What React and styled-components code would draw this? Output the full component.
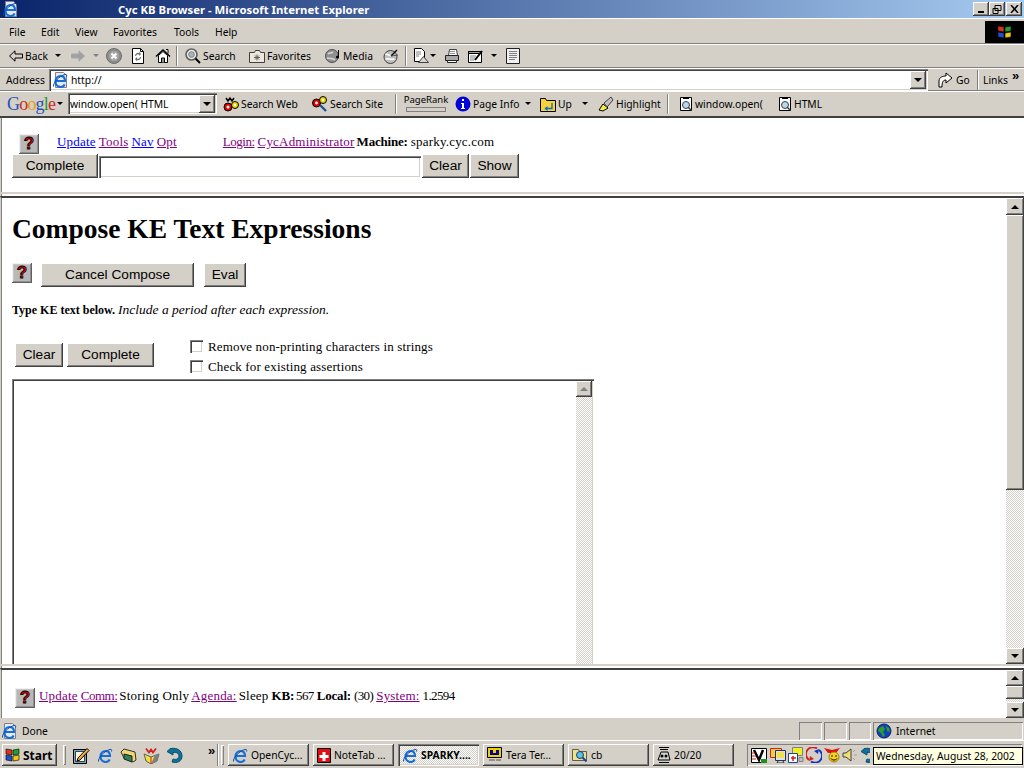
import React from 'react'
import styled, { createGlobalStyle, css } from 'styled-components'

const UI = `"Noto Sans", "DejaVu Sans", sans-serif`
const SERIF = `"Liberation Serif", "Times New Roman", serif`
const FACE = '#d4d0c8'

const raised = css`
  box-shadow: inset -1px -1px #404040, inset 1px 1px #fff, inset -2px -2px #808080, inset 2px 2px ${FACE};
`
const sunken = css`
  box-shadow: inset 1px 1px #808080, inset 2px 2px #404040, inset -1px -1px #fff, inset -2px -2px ${FACE};
`
const hatch = css`
  background: repeating-conic-gradient(#fff 0 25%, ${FACE} 0 50%) 0 0 / 2px 2px;
`

const Global = createGlobalStyle`
  html, body { margin: 0; padding: 0; background: ${FACE}; }
  * { box-sizing: border-box; }
`

const Screen = styled.div`
  width: 1024px;
  height: 768px;
  position: relative;
  overflow: hidden;
  display: flex;
  flex-direction: column;
  background: ${FACE};
  font: 10.3px ${UI};
  color: #000;
`

const TitleBar = styled.div`
  height: 18px;
  flex: none;
  display: flex;
  align-items: center;
  padding-left: 2px;
  background: linear-gradient(90deg, #0a246a 0%, #a6caf0 100%);
`
const TitleText = styled.span`
  margin-left: 100px;
  flex: 1;
  color: #fff;
  font-weight: 700;
  font-size: 11.35px;
`
const WinButton = styled.div`
  width: 16px;
  height: 14px;
  margin-right: ${p => p.$mr || 0}px;
  background: ${FACE};
  display: flex;
  align-items: center;
  justify-content: center;
  ${raised}
`

const Band = styled.div`
  height: ${p => p.$h}px;
  flex: none;
  display: flex;
  align-items: center;
  padding-top: ${p => p.$pt || 0}px;
  border-bottom: ${p => p.$heavy ? '2px solid #404040' : '1px solid #808080'};
  box-shadow: inset 0 1px #fff;
`
const MenuBar = styled.div`
  display: flex;
  padding-left: 9px;
`
const MenuItem = styled.span`
  width: ${p => p.$w}px;
`
const BrandBox = styled.div`
  margin-left: auto;
  width: 39px;
  height: 22px;
  background: #000;
  display: flex;
  align-items: center;
  justify-content: center;
`
const Tool = styled.span`
  display: flex;
  align-items: center;
  gap: 2px;
  flex: none;
  white-space: nowrap;
  width: ${p => (p.$w ? `${p.$w}px` : 'auto')};
  margin-left: ${p => p.$ml || 0}px;
`
const Caret = styled.span`
  flex: none;
  width: 0;
  height: 0;
  margin-left: ${p => p.$ml}px;
  border-left: 3px solid transparent;
  border-right: 3px solid transparent;
  border-top: 3px solid ${p => (p.$dim ? '#808080' : '#000')};
`
const Divider = styled.span`
  flex: none;
  width: 2px;
  height: 20px;
  margin-left: ${p => p.$ml}px;
  border-left: 1px solid #808080;
  border-right: 1px solid #fff;
`
const AddressLabel = styled.span`
  margin-left: 6px;
  width: 43px;
`
const AddressField = styled.div`
  width: 879px;
  height: 22px;
  background: #fff;
  display: flex;
  align-items: center;
  padding: 2px 2px 2px 3px;
  gap: 3px;
  ${sunken}
`
const ComboButton = styled.span`
  flex: none;
  margin-left: auto;
  width: 16px;
  height: 18px;
  background: ${FACE};
  display: flex;
  align-items: center;
  justify-content: center;
  ${raised}
`
const GoogleMark = styled.span`
  margin-left: 7px;
  width: 48px;
  flex: none;
  font: 18px/20px ${SERIF};
  letter-spacing: -0.8px;
`
const Letter = styled.span`
  color: ${p => p.$c};
`
const GoogleSelect = styled.div`
  margin-left: 5px;
  width: 149px;
  height: 21px;
  flex: none;
  background: #fff;
  display: flex;
  align-items: center;
  padding: 2px;
  ${sunken}
`
const PageRank = styled.span`
  margin-left: 6px;
  width: 46px;
  flex: none;
  font-size: 9.5px;
  line-height: 10px;
  display: flex;
  flex-direction: column;
  align-items: center;
  gap: 2px;
`
const RankBar = styled.span`
  width: 40px;
  height: 5px;
  border: 1px solid #808080;
  background: ${FACE};
`

const Frame = styled.div`
  flex: none;
  height: ${p => p.$h}px;
  display: flex;
  background: #fff;
  border-left: 1px solid ${FACE};
  padding-left: 1px;
  box-shadow: inset 1px 0 #808080;
  overflow: hidden;
  font: 13px ${SERIF};
  ${p => p.$top && css`border-top: 2px solid #404040;`}
`
const FrameBody = styled.div`
  flex: 1;
  min-width: 0;
  padding: ${p => p.$pad};
`
const Splitter = styled.div`
  flex: none;
  height: ${p => p.$h}px;
  background: #fff;
  border-left: 1px solid ${FACE};
  box-shadow: inset 1px 0 #808080;
  border-top: 2px solid ${FACE};
`
const NavRow = styled.div`
  display: flex;
  align-items: flex-start;
  height: 20px;
  line-height: 16px;
  letter-spacing: 0.2px;
`
const HelpIcon = styled.span`
  flex: none;
  width: 20px;
  height: 20px;
  margin: ${p => p.$m || 0};
  background: #b8b8b8;
  display: flex;
  align-items: center;
  justify-content: center;
  box-shadow: inset -1px -1px #606060, inset 1px 1px #f0f0f0, inset -2px -2px #909090, inset 2px 2px #c8c8c8;
`
const HelpMark = styled.span`
  font: 900 17px/20px "Liberation Sans", sans-serif;
  color: #e00000;
  -webkit-text-stroke: 0.8px #000;
`
const NavLink = styled.a`
  color: ${p => (p.$seen ? '#800080' : '#0000ff')};
  text-decoration: underline;
  margin-left: ${p => p.$ml || 0}px;
  ${p => p.$tight && css`letter-spacing: -0.5px;`}
`
const Plain = styled.span`
  margin-left: ${p => p.$ml || 3}px;
  white-space: pre;
`
const Digits = styled(Plain)`
  letter-spacing: -0.6px;
`
const Strong = styled.b`
  margin-left: ${p => p.$ml || 4}px;
  letter-spacing: -0.2px;
`
const FormRow = styled.div`
  display: flex;
  align-items: flex-start;
  margin: ${p => p.$m || 0};
`
const PushButton = styled.button`
  width: ${p => p.$w}px;
  height: 24px;
  margin: ${p => p.$m || 0};
  padding: 0 0 1px;
  border: 0;
  flex: none;
  background: ${FACE};
  font: 13.7px "Liberation Sans", sans-serif;
  color: #000;
  ${raised}
`
const TextInput = styled.div`
  width: 322px;
  height: 22px;
  margin: 2px 1px 0;
  background: #fff;
  flex: none;
  ${sunken}
`
const Heading = styled.h1`
  margin: 0;
  font: 700 27.5px/32px ${SERIF};
`
const Hint = styled.p`
  margin: 15px 0 0;
  font: 700 12px/16px ${SERIF};
`
const HintNote = styled.i`
  font-weight: 400;
  font-size: 13.5px;
`
const Options = styled.div`
  margin-left: 36px;
  display: flex;
  flex-direction: column;
  gap: 7px;
`
const OptionRow = styled.label`
  display: flex;
  align-items: center;
  height: 13px;
  gap: 5px;
  font: 13px/13px ${SERIF};
  letter-spacing: 0.15px;
`
const Tick = styled.span`
  width: 13px;
  height: 13px;
  flex: none;
  background: #fff;
  ${sunken}
`
const TextArea = styled.div`
  width: 582px;
  height: 400px;
  margin-top: 6px;
  background: #fff;
  display: flex;
  justify-content: flex-end;
  padding: 2px 2px 0 0;
  ${sunken}
`
const Scroll = styled.div`
  flex: none;
  width: ${p => p.$w || 18}px;
  display: flex;
  flex-direction: column;
  ${hatch}
`
const ScrollBtn = styled.div`
  flex: none;
  height: ${p => p.$h || 16}px;
  background: ${FACE};
  display: flex;
  align-items: center;
  justify-content: center;
  margin-top: ${p => (p.$end ? 'auto' : 0)};
  ${raised}
`
const Arrow = styled.span`
  width: 0;
  height: 0;
  border-left: 4px solid transparent;
  border-right: 4px solid transparent;
  ${p => (p.$down
    ? css`border-top: 4px solid ${p.$c || '#000'};`
    : css`border-bottom: 4px solid ${p.$c || '#000'};`)}
`

const StatusBar = styled.div`
  height: 21px;
  flex: none;
  display: flex;
  align-items: center;
  padding: 1px 0 0 1px;
  border-bottom: 1px solid #fff;
`
const StatusText = styled.span`
  margin-left: 5px;
  flex: 1;
`
const StatusCell = styled.span`
  flex: none;
  width: ${p => p.$w}px;
  height: 18px;
  margin-right: ${p => p.$mr ?? 2}px;
  display: flex;
  align-items: center;
  gap: 4px;
  padding-left: 3px;
  box-shadow: inset 1px 1px #808080, inset -1px -1px #fff;
`
const Taskbar = styled.div`
  height: 27px;
  flex: none;
  display: flex;
  align-items: center;
  padding: 3px 0 2px;
`
const StartButton = styled.div`
  margin-left: 2px;
  width: 55px;
  height: 22px;
  display: flex;
  align-items: center;
  gap: 2px;
  padding-left: 3px;
  font-weight: 700;
  font-size: 12px;
  flex: none;
  ${raised}
`
const Grip = styled.span`
  flex: none;
  width: 3px;
  height: 20px;
  margin-left: ${p => p.$ml}px;
  box-shadow: inset 1px 1px #fff, inset -1px -1px #808080;
`
const TaskSep = styled.span`
  flex: none;
  width: 2px;
  height: 22px;
  margin-left: ${p => p.$ml}px;
  border-left: 1px solid #808080;
  border-right: 1px solid #fff;
`
const Launch = styled.span`
  flex: none;
  margin-left: ${p => p.$ml}px;
  display: flex;
`
const Chevron = styled.span`
  flex: none;
  margin: -8px 0 0 ${p => p.$ml}px;
  width: 8px;
  font: 700 13px/10px "Liberation Sans", sans-serif;
`
const TaskButton = styled.div`
  flex: none;
  width: 81px;
  height: 22px;
  margin-left: ${p => p.$ml ?? 4}px;
  display: flex;
  align-items: center;
  gap: 3px;
  padding-left: 4px;
  white-space: nowrap;
  overflow: hidden;
  ${p => (p.$active
    ? css`
        font-weight: 700;
        ${hatch}
        ${sunken}
      `
    : raised)}
`
const Tray = styled.div`
  flex: none;
  width: 275px;
  height: 22px;
  margin-left: 13px;
  display: flex;
  align-items: center;
  gap: 2px;
  padding-left: 4px;
  box-shadow: inset 1px 1px #808080, inset -1px -1px #fff;
`
const Tooltip = styled.div`
  position: absolute;
  left: 873px;
  top: 747px;
  width: 150px;
  height: 18px;
  background: #ffffe1;
  border: 1px solid #000;
  padding-left: 2px;
  line-height: 16px;
  white-space: nowrap;
`

const S = ({ w = 16, h = 16, children }) => (
  <svg width={w} height={h} viewBox={`0 0 ${w} ${h}`} style={{ flex: 'none', display: 'block' }}>{children}</svg>
)

const IeE = () => (
  <g fill="none">
    <path d="M3.500 9h9.500C13 5.500 11 4 8.500 4S3.500 6 3.500 9.500 6 15 8.500 15c2 0 3.500-1 4.200-2.500" stroke="#1470d8" strokeWidth="2.200" />
    <path d="M1.500 14.500C1 11 7 4 13 2.500c1.500-.4 2 .5 1.500 2" stroke="#0a4aa8" />
  </g>
)
const IeLogo = () => (
  <S>
    <path d="M3.500 .5h8l3 3v12h-11z" fill="#e8e8f0" stroke="#808090" />
    <IeE />
  </S>
)
const BackIcon = () => (
  <S w={14} h={12}>
    <path d="M.5 6L6 .8V4h7.500v4H6v3.200z" fill={FACE} stroke="#000" />
  </S>
)
const ForwardIcon = () => (
  <S w={14} h={12}>
    <path d="M13.500 6L8 .8V4H.5v4H8v3.200z" fill="#a0a0a0" stroke="#a8a8a8" />
  </S>
)
const StopIcon = () => (
  <S>
    <circle cx="8" cy="8" r="7.500" fill="#8c8c8c" stroke="#707070" />
    <circle cx="8" cy="8" r="5" fill="#a8a8a8" />
    <path d="M5.500 5.500l5 5M10.500 5.500l-5 5" stroke="#fff" strokeWidth="2" />
  </S>
)
const RefreshIcon = () => (
  <S w={14} h={16}>
    <path d="M1.500 .5h8l3 3v12h-11z" fill="#fff" stroke="#000" />
    <path d="M9.500 .5v3h3" fill="none" stroke="#000" />
    <path d="M4 8a3 3 0 0 1 4-3V3.500L10 6 8 8V6.500A2 2 0 0 0 5 8zM10 9a3 3 0 0 1-4 3v1.500L4 11l2-2v1.500A2 2 0 0 0 9 9z" fill="#707070" />
  </S>
)
const HomeIcon = () => (
  <S>
    <path d="M1 8.500L8 2l7 6.500" fill="none" stroke="#000" strokeWidth="1.400" />
    <path d="M3.500 7.500L8 3.500l4.500 4v7h-9z" fill="#fff" stroke="#000" />
    <path d="M6.500 14.500V10h3v4.500" fill="#909090" stroke="#000" />
    <path d="M11 1.500h2v4" fill="#fff" stroke="#000" />
  </S>
)
const SearchIcon = () => (
  <S>
    <circle cx="6.500" cy="6.500" r="5.500" fill="#e8e8e8" stroke="#606060" strokeWidth="1.600" />
    <circle cx="6.500" cy="6.500" r="2.800" fill="#a8b8b8" stroke="#808080" />
    <path d="M10.500 10.500l4.500 4.500" stroke="#000" strokeWidth="2" />
  </S>
)
const FavIcon = () => (
  <S>
    <path d="M.5 4.500h5l1-2h4l1 2h4v10H.5z" fill="#ece8dc" stroke="#404040" />
    <path d="M8 6.500v6M5 9.500h6M6 7.500l4 4M10 7.500l-4 4" stroke="#606060" />
  </S>
)
const MediaIcon = () => (
  <S>
    <circle cx="7" cy="8" r="6.500" fill="#909090" stroke="#505050" />
    <path d="M3 6c2-2 3 0 5-2M2 10c3 1 6 0 8 2" fill="none" stroke="#d8d8d8" strokeWidth="1.500" />
    <path d="M13.500 2v7" stroke="#000" />
    <circle cx="12.500" cy="9" r="1.500" fill="#000" />
  </S>
)
const HistoryIcon = () => (
  <S>
    <circle cx="7.500" cy="9" r="6.500" fill="#c0c0c0" stroke="#404040" />
    <path d="M2.500 6.500c3-1 4 2 6 1M2.500 11c3-1 5 1 9 0" fill="none" stroke="#fff" strokeWidth="1.500" />
    <path d="M8 8l6-6" stroke="#000" strokeWidth="1.500" />
    <path d="M8 8l7-1" stroke="#505050" />
  </S>
)
const MailIcon = () => (
  <S>
    <path d="M1.500 .5h7l3 3v10h-10z" fill="#fff" stroke="#000" />
    <path d="M3 4h5M3 6h5M3 8h3" stroke="#808080" />
    <path d="M5.500 14.500l5-6 5 6z" fill="#d8d8d0" stroke="#404040" />
  </S>
)
const PrintIcon = () => (
  <S>
    <path d="M5.500 1.500h7l1 6h-9z" fill="#fff" stroke="#404040" />
    <path d="M6 3.500h5M6 5.500h5" stroke="#909090" />
    <path d="M1.500 7.500h13v5h-13z" fill="#a8a8a8" stroke="#202020" />
    <path d="M3.500 12.500h9v2h-9z" fill="#fff" stroke="#202020" />
  </S>
)
const EditIcon = () => (
  <S>
    <path d="M.5 3.500h13v11H.5z" fill="#fff" stroke="#000" />
    <path d="M.5 3.500h13v2H.5z" fill="#a0a0a0" stroke="#000" />
    <path d="M2 8h6M2 10h5M2 12h4" stroke="#808080" />
    <path d="M7 12l7-9" stroke="#000" strokeWidth="2" />
  </S>
)
const DiscussIcon = () => (
  <S>
    <path d="M1.500 .5h13v15h-13z" fill="#f0f0f0" stroke="#202020" />
    <path d="M4 3.500h8M4 5.500h8M4 7.500h8M4 9.500h8M4 11.500h6" stroke="#808080" />
  </S>
)
const SearchWebIcon = () => (
  <S>
    <path d="M3 2l2 3 2-3 2 3 2-3" fill="none" stroke="#000" strokeWidth="1.500" />
    <circle cx="5" cy="11" r="4" fill="#e00000" stroke="#000" />
    <circle cx="5" cy="11" r="1.500" fill="#fff" />
    <circle cx="12" cy="9" r="3.500" fill="#e8d800" stroke="#000" />
    <circle cx="12" cy="9" r="1.200" fill="#fff" />
  </S>
)
const SearchSiteIcon = () => (
  <S>
    <circle cx="4.500" cy="7" r="4" fill="#e00000" stroke="#000" />
    <circle cx="4.500" cy="7" r="1.400" fill="#fff" />
    <circle cx="11" cy="4" r="3.500" fill="#e8d800" stroke="#000" />
    <circle cx="11" cy="4" r="1.200" fill="#fff" />
    <path d="M8 9l6 6" stroke="#1a50a0" strokeWidth="2.400" />
  </S>
)
const InfoIcon = () => (
  <S>
    <circle cx="8" cy="8" r="7.500" fill="#0000d8" />
    <path d="M7 3h2v2H7zM6 7h3v5h1v1H6v-1h1V8H6z" fill="#fff" />
  </S>
)
const UpIcon = () => (
  <S>
    <path d="M.5 2.500h5l1 2h9v11H.5z" fill="#f8d038" stroke="#000" />
    <path d="M5 12.500h7V7" fill="none" stroke="#0070c8" strokeWidth="1.300" />
    <path d="M7.500 10v5l-3-2.500z" fill="#0070c8" />
  </S>
)
const HighlightIcon = () => (
  <S>
    <path d="M1 14l4-6 5 4-5 3z" fill="#f8f040" stroke="#000" />
    <path d="M6 7l7-6 2 3-6 7z" fill="#c0c0c0" stroke="#404040" />
  </S>
)
const FindIcon = () => (
  <S w={14} h={16}>
    <path d="M1.500 1.500h11v13h-11z" fill="#fff" stroke="#000" />
    <path d="M4 1h6v2H4z" fill="#000" />
    <circle cx="7" cy="9" r="3.500" fill="#b8d8f0" stroke="#404040" />
    <path d="M9 11l3 3" stroke="#404040" strokeWidth="1.500" />
  </S>
)
const GoIcon = () => (
  <S>
    <path d="M1 15V9c0-4 4-5 7-5V1l6 5-6 5V8C5 8 4 10 4 15z" fill="#fff" stroke="#000" />
  </S>
)
const FlagIcon = () => (
  <S>
    <path d="M1 2l6 1v5L1 7z" fill="#e03020" stroke="#000" strokeWidth=".6" />
    <path d="M8 3l6-1v5l-6 1z" fill="#20a030" stroke="#000" strokeWidth=".6" />
    <path d="M1 8l6 1v5l-6-1z" fill="#2050d0" stroke="#000" strokeWidth=".6" />
    <path d="M8 9l6-1v5l-6 1z" fill="#f0c810" stroke="#000" strokeWidth=".6" />
  </S>
)
const GlobeIcon = () => (
  <S>
    <circle cx="8" cy="8" r="7" fill="#1040c0" stroke="#102060" />
    <path d="M3 5l4-2 2 3-2 3 2 3-2 2-2-4-3-2zM10 3l3 2 1 4-3-1z" fill="#28a028" />
  </S>
)
const NotepadIcon = () => (
  <S w={17} h={17}>
    <path d="M.5 2.500h13v14H.5z" fill="#70a8d0" stroke="#000" />
    <path d="M2.500 4.500h9v10h-9z" fill="#fff8d8" stroke="#404040" />
    <path d="M5 11l9-9.500 2 2L7 13l-3 1z" fill="#f0b030" stroke="#000" />
  </S>
)
const FolderIcon = () => (
  <S w={17} h={17}>
    <path d="M1 5l3-3 11 3 1 8-3 2-9-4z" fill="#f0d870" stroke="#303030" />
    <path d="M4 7l8 2v6l-8-3z" fill="#308058" stroke="#202020" />
  </S>
)
const MailGiftIcon = () => (
  <S w={17} h={17}>
    <path d="M1 7l7 3 8-3-2 7-6 3-5-3z" fill="#f0e040" stroke="#606060" />
    <path d="M12 8l4-1-2 7-6 3z" fill="#808080" />
    <path d="M3 1.500l3 4 2-3 2 3 3-4" fill="none" stroke="#d02020" strokeWidth="1.800" />
    <path d="M8 10v7" stroke="#d02020" />
  </S>
)
const TealIcon = ({ w = 17 }) => (
  <S w={w} h={17}>
    <path d="M5 1.500c6-1 11 2 11 7.500s-5 7.500-10 6l1-3c3 1 6 0 6-3S10 5 7 5.500V8L1 4.500 5 1z" fill="#107098" stroke="#0a5070" />
  </S>
)
const IeSmall = () => (
  <S>
    <IeE />
  </S>
)
const NoteTabIcon = () => (
  <S w={14} h={16}>
    <path d="M.5 1.500h13v14H.5z" fill="#e01010" stroke="#000" />
    <path d="M5.500 5h3v3h3v3h-3v3h-3v-3h-3V8h3z" fill="#fff" />
  </S>
)
const TermIcon = () => (
  <S>
    <path d="M.5 .5h14v10H.5z" fill="#f0d000" stroke="#000" />
    <path d="M3 3h9v5H3z" fill="#0000a0" />
    <path d="M6 3h3v3H6z" fill="#f0d000" />
    <path d="M2 13h6M9 13h5" stroke="#505050" fill="none" />
  </S>
)
const CbIcon = () => (
  <S>
    <path d="M.5 2.500h6l1 2h7v9H.5z" fill="#f0e090" stroke="#606040" />
    <circle cx="8" cy="8" r="3.500" fill="#58c0f0" stroke="#204060" />
    <path d="M10.500 10.500l4 4" stroke="#2040a0" strokeWidth="2" />
  </S>
)
const TwentyIcon = () => (
  <S w={14} h={18}>
    <path d="M2 1.500h10M3 3.500h8" stroke="#000" />
    <path d="M1 14l3-8h7l2 8z" fill="#d0d0d0" stroke="#000" />
    <circle cx="5" cy="10" r="1.500" fill="#000" />
    <circle cx="9" cy="10" r="1.500" fill="#000" />
    <path d="M2 16.500h10" stroke="#000" />
  </S>
)
const TrayV = () => (
  <S w={17} h={17}>
    <path d="M.5 1.500h15v14H.5z" fill="#fff" stroke="#000" />
    <path d="M3 3l5 10 4-10" fill="none" stroke="#000" strokeWidth="2.500" />
    <path d="M10 12h6v4h-6z" fill="#209020" />
    <path d="M1 6h3M1 9h4M1 12h4" stroke="#d02020" />
  </S>
)
const TrayScreens = () => (
  <S>
    <path d="M.5 1.500h11v9H.5z" fill="#f0d040" stroke="#d02020" />
    <path d="M5.500 3.500h10v10h-10z" fill="#e0e0e0" stroke="#203060" />
    <path d="M7 5h7v6H7z" fill="#f0e050" />
    <path d="M8 14l-1 2h7l-1-2" fill="none" stroke="#303030" />
  </S>
)
const TrayWindows = () => (
  <S>
    <path d="M4.500 .5h10v8h-10z" fill="#f0f020" stroke="#808080" />
    <path d="M.5 6.500h9v9h-9z" fill="#fff" stroke="#2040a0" />
    <path d="M3 11h5M5 9v5" stroke="#d02020" strokeWidth="1.500" />
    <path d="M11 10.500h4v4h-4z" fill="#c0c0c0" stroke="#808080" />
  </S>
)
const TraySync = () => (
  <S>
    <path d="M3 13A7 7 0 0 1 11 1.500" fill="none" stroke="#d02020" strokeWidth="1.800" />
    <path d="M13 3a7 7 0 0 1-8 11.500" fill="none" stroke="#1030c0" strokeWidth="1.800" />
    <path d="M8 4l5-2-1 5z" fill="#1030c0" />
    <path d="M8 12l-5 2 1-5z" fill="#d02020" />
  </S>
)
const TraySmile = () => (
  <S>
    <path d="M0 1l8 2 8-2-4 5H4z" fill="#e01010" />
    <circle cx="10" cy="10" r="5" fill="#f8d020" stroke="#a08000" />
    <circle cx="8" cy="9" r=".8" fill="#000" />
    <circle cx="12" cy="9" r=".8" fill="#000" />
    <path d="M7 11.500c1 2 5 2 6 0" fill="none" stroke="#000" />
  </S>
)
const TraySpeaker = () => (
  <S>
    <path d="M1 6h3l5-4v12l-5-4H1z" fill="#f0e070" stroke="#404040" />
    <path d="M11 5l2-2M12 8h3M11 11l2 2" stroke="#a0a0a0" />
  </S>
)

const menu = [['File', 32], ['Edit', 34], ['View', 38], ['Favorites', 61], ['Tools', 41], ['Help', 30]]

const TopFrame = () => (
  <Frame $h={74}>
    <FrameBody $pad="16px 0 0 10px">
      <NavRow>
        <HelpIcon $m="0 0 0 7px"><HelpMark>?</HelpMark></HelpIcon>
        <NavLink $ml={18}>Update</NavLink>
        <NavLink $ml={3} $seen>Tools</NavLink>
        <NavLink $ml={3}>Nav</NavLink>
        <NavLink $ml={3} $seen>Opt</NavLink>
        <NavLink $ml={46} $seen $tight>Login:</NavLink>
        <NavLink $ml={3} $seen>CycAdministrator</NavLink>
        <Strong $ml={2}>Machine:</Strong>
        <Plain>sparky.cyc.com</Plain>
      </NavRow>
      <FormRow>
        <PushButton $w={86}>Complete</PushButton>
        <TextInput />
        <PushButton $w={47}>Clear</PushButton>
        <PushButton $w={49} $m="0 0 0 1px">Show</PushButton>
      </FormRow>
    </FrameBody>
  </Frame>
)

const MainFrame = () => (
  <Frame $h={468} $top>
    <FrameBody $pad="15px 0 0 10px">
      <Heading>Compose KE Text Expressions</Heading>
      <FormRow $m="18px 0 0 0">
        <HelpIcon><HelpMark>?</HelpMark></HelpIcon>
        <PushButton $w={153} $m="0 0 0 9px">Cancel Compose</PushButton>
        <PushButton $w={42} $m="0 0 0 10px">Eval</PushButton>
      </FormRow>
      <Hint>Type KE text below. <HintNote>Include a period after each expression.</HintNote></Hint>
      <FormRow $m="22px 0 0 3px">
        <PushButton $w={48} $m="3px 0 0 0">Clear</PushButton>
        <PushButton $w={87} $m="3px 0 0 4px">Complete</PushButton>
        <Options>
          <OptionRow><Tick />Remove non-printing characters in strings</OptionRow>
          <OptionRow><Tick />Check for existing assertions</OptionRow>
        </Options>
      </FormRow>
      <TextArea>
        <Scroll $w={16}>
          <ScrollBtn><Arrow $c="#808080" /></ScrollBtn>
        </Scroll>
      </TextArea>
    </FrameBody>
    <Scroll>
      <ScrollBtn $h={17}><Arrow /></ScrollBtn>
      <ScrollBtn $h={275} />
      <ScrollBtn $end $h={16}><Arrow $down /></ScrollBtn>
    </Scroll>
  </Frame>
)

const BottomFrame = () => (
  <Frame $h={50} $top>
    <FrameBody $pad="18px 0 0 13px">
      <NavRow>
        <HelpIcon><HelpMark>?</HelpMark></HelpIcon>
        <NavLink $ml={4} $seen>Update</NavLink>
        <NavLink $ml={3} $seen $tight>Comm:</NavLink>
        <Plain $ml={2}>Storing Only</Plain>
        <NavLink $ml={2} $seen>Agenda:</NavLink>
        <Plain $ml={2}>Sleep</Plain>
        <Strong $ml={3}>KB:</Strong>
        <Digits $ml={2}>567</Digits>
        <Strong $ml={3}>Local:</Strong>
        <Digits $ml={3}>(30)</Digits>
        <NavLink $ml={3} $seen>System:</NavLink>
        <Digits $ml={3}>1.2594</Digits>
      </NavRow>
    </FrameBody>
    <Scroll>
      <ScrollBtn $h={16}><Arrow /></ScrollBtn>
      <ScrollBtn $h={13} />
      <ScrollBtn $end $h={16}><Arrow $down /></ScrollBtn>
    </Scroll>
  </Frame>
)

export default function App() {
  return (
    <Screen>
      <Global />
      <TitleBar>
        <IeLogo />
        <TitleText>Cyc KB Browser - Microsoft Internet Explorer</TitleText>
        <WinButton><svg width="8" height="8"><path d="M1 6h6v2H1z" /></svg></WinButton>
        <WinButton $mr={1}><svg width="10" height="9"><path d="M3 .5h6v5H3zM1 3.500h5v5H1z" fill="#d4d0c8" stroke="#000" /></svg></WinButton>
        <WinButton $mr={2}><svg width="9" height="8"><path d="M1 0l7 8M8 0L1 8" stroke="#000" strokeWidth="1.500" /></svg></WinButton>
      </TitleBar>

      <Band $h={26} $pt={2}>
        <MenuBar>
          {menu.map(([label, w]) => <MenuItem key={label} $w={w}>{label}</MenuItem>)}
        </MenuBar>
        <BrandBox><FlagIcon /></BrandBox>
      </Band>

      <Band $h={24}>
        <Tool $ml={9} $w={38}><BackIcon />Back</Tool>
        <Caret $ml={8} />
        <Tool $ml={10}><ForwardIcon /></Tool>
        <Caret $ml={8} $dim />
        <Tool $ml={7}><StopIcon /></Tool>
        <Tool $ml={9}><RefreshIcon /></Tool>
        <Tool $ml={10}><HomeIcon /></Tool>
        <Divider $ml={5} />
        <Tool $ml={7} $w={50}><SearchIcon />Search</Tool>
        <Tool $ml={14} $w={62}><FavIcon />Favorites</Tool>
        <Tool $ml={14} $w={45}><MediaIcon />Media</Tool>
        <Tool $ml={13}><HistoryIcon /></Tool>
        <Divider $ml={6} />
        <Tool $ml={6}><MailIcon /></Tool>
        <Caret $ml={1} />
        <Tool $ml={8}><PrintIcon /></Tool>
        <Tool $ml={8}><EditIcon /></Tool>
        <Caret $ml={7} />
        <Tool $ml={8}><DiscussIcon /></Tool>
      </Band>

      <Band $h={23} $pt={1}>
        <AddressLabel>Address</AddressLabel>
        <AddressField>
          <IeLogo />http://
          <ComboButton><Arrow $down /></ComboButton>
        </AddressField>
        <Tool $ml={10} $w={29}><GoIcon />Go</Tool>
        <Divider $ml={10} />
        <Tool $ml={4} $w={24}>Links</Tool>
        <Chevron $ml={5}>»</Chevron>
      </Band>

      <Band $h={27} $heavy>
        <GoogleMark>
          <Letter $c="#2850b8">G</Letter><Letter $c="#d02a1e">o</Letter><Letter $c="#e0a010">o</Letter><Letter $c="#2850b8">g</Letter><Letter $c="#2a9a30">l</Letter><Letter $c="#d02a1e">e</Letter>
        </GoogleMark>
        <Caret $ml={2} />
        <GoogleSelect>
          window.open( HTML
          <ComboButton><Arrow $down /></ComboButton>
        </GoogleSelect>
        <Tool $ml={6} $w={75}><SearchWebIcon />Search Web</Tool>
        <Tool $ml={14} $w={71}><SearchSiteIcon />Search Site</Tool>
        <Divider $ml={12} />
        <PageRank>PageRank<RankBar /></PageRank>
        <Tool $ml={6} $w={65}><InfoIcon />Page Info</Tool>
        <Caret $ml={5} />
        <Tool $ml={9} $w={31}><UpIcon />Up</Tool>
        <Caret $ml={11} />
        <Tool $ml={10} $w={57}><HighlightIcon />Highlight</Tool>
        <Divider $ml={12} />
        <Tool $ml={10} $w={83}><FindIcon />window.open(</Tool>
        <Tool $ml={16} $w={41}><FindIcon />HTML</Tool>
      </Band>

      <TopFrame />
      <Splitter $h={4} />
      <MainFrame />
      <Splitter $h={4} />
      <BottomFrame />
      <Splitter $h={2} />

      <StatusBar>
        <IeLogo />
        <StatusText>Done</StatusText>
        <StatusCell $w={23} />
        <StatusCell $w={23} />
        <StatusCell $w={22} />
        <StatusCell $w={150} $mr={1}><GlobeIcon />Internet</StatusCell>
      </StatusBar>

      <Taskbar>
        <StartButton><FlagIcon />Start</StartButton>
        <Grip $ml={6} />
        <Launch $ml={7}><NotepadIcon /></Launch>
        <Launch $ml={7}><IeSmall /></Launch>
        <Launch $ml={7}><FolderIcon /></Launch>
        <Launch $ml={6}><MailGiftIcon /></Launch>
        <Launch $ml={6}><TealIcon /></Launch>
        <Chevron $ml={25}>»</Chevron>
        <TaskSep $ml={1} />
        <Grip $ml={2} />
        <TaskButton $ml={4}><IeSmall />OpenCyc...</TaskButton>
        <TaskButton><NoteTabIcon />NoteTab ...</TaskButton>
        <TaskButton $active><IeSmall />SPARKY....</TaskButton>
        <TaskButton><TermIcon />Tera Ter...</TaskButton>
        <TaskButton><CbIcon />cb</TaskButton>
        <TaskButton><TwentyIcon />20/20</TaskButton>
        <Tray>
          <TrayV /><TrayScreens /><TrayWindows /><TraySync /><TraySmile /><TraySpeaker /><TealIcon w={10} />
        </Tray>
      </Taskbar>
      <Tooltip>Wednesday, August 28, 2002</Tooltip>
    </Screen>
  )
}
